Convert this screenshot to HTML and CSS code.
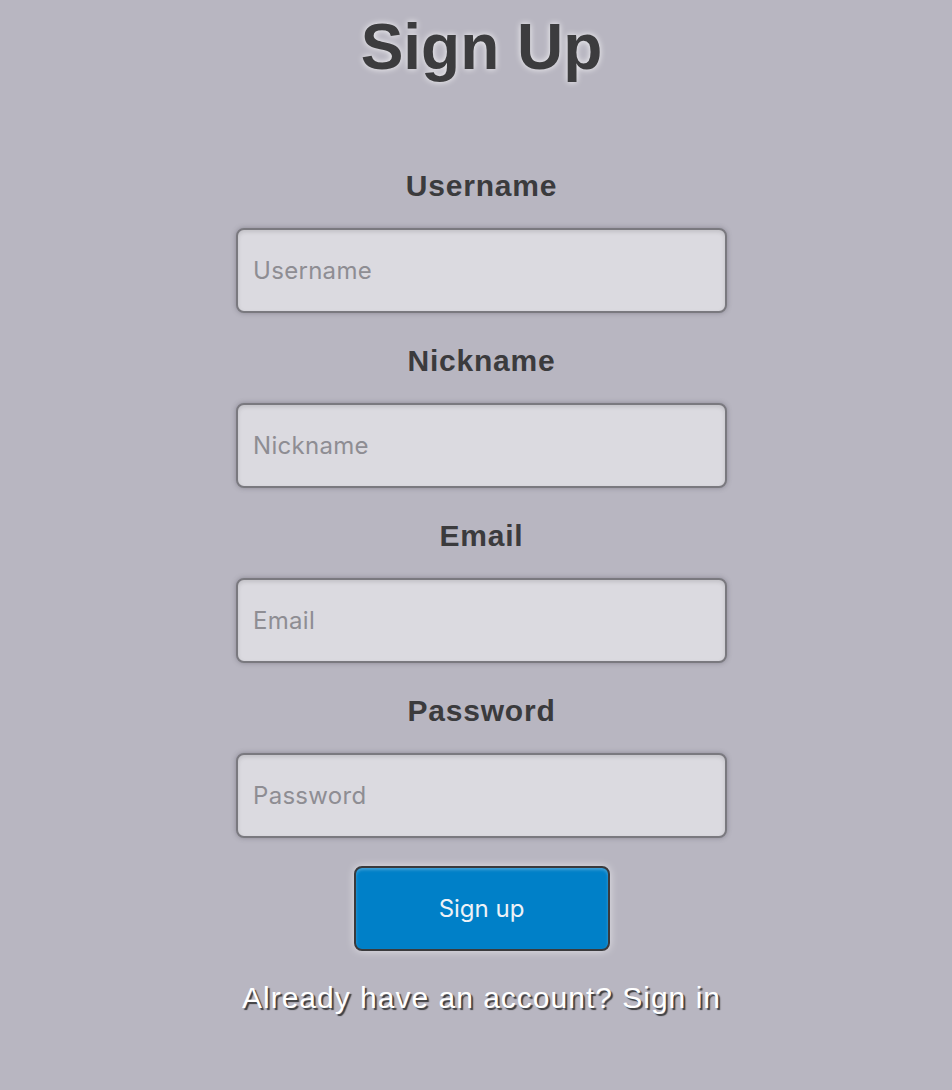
FILE: index.html
```html
<!DOCTYPE html>
<html lang="en">
<head>
<meta charset="utf-8">
<title>Sign Up</title>
<link rel="stylesheet" href="styles.css">
</head>
<body>
<main class="page">
  <h1 class="title">Sign Up</h1>
  <form class="form">
    <div class="field">
      <label class="label" for="username">Username</label>
      <input class="input" id="username" type="text" placeholder="Username">
    </div>
    <div class="field">
      <label class="label" for="nickname">Nickname</label>
      <input class="input" id="nickname" type="text" placeholder="Nickname">
    </div>
    <div class="field">
      <label class="label" for="email">Email</label>
      <input class="input" id="email" type="email" placeholder="Email">
    </div>
    <div class="field">
      <label class="label" for="password">Password</label>
      <input class="input" id="password" type="password" placeholder="Password">
    </div>
    <button class="button" type="button">Sign up</button>
  </form>
  <p class="switch">Already have an account? Sign in</p>
</main>
</body>
</html>
```
FILE: styles.css
```css
html, body {
  margin: 0;
  padding: 0;
}
body {
  background: #b8b6c1;
  min-height: 1090px;
  font-family: "Liberation Sans", Arial, sans-serif;
}
.page {
  display: flex;
  flex-direction: column;
  align-items: center;
  padding-top: 10px;
  padding-left: 11px;
}
.title {
  margin: 0;
  font-family: "Liberation Sans", Arial, sans-serif;
  font-size: 64px;
  line-height: 74px;
  font-weight: 700;
  color: #3c3c3e;
  text-shadow: 0 0 6px rgba(255, 255, 255, 0.9);
}
.form {
  display: flex;
  flex-direction: column;
  align-items: center;
  margin-top: 54px;
}
.field {
  display: flex;
  flex-direction: column;
  align-items: center;
}
.label {
  font-family: "Liberation Sans", Arial, sans-serif;
  font-size: 30px;
  line-height: 34px;
  letter-spacing: 0.8px;
  font-weight: 700;
  color: #3b3b3d;
  margin-top: 31px;
  margin-bottom: 25px;
}
.input {
  box-sizing: border-box;
  width: 491px;
  height: 85px;
  margin: 0;
  padding: 0 15px;
  border: 2px solid #7a797f;
  border-radius: 8px;
  background: #dbdae0;
  font-family: Inter, "Noto Sans", sans-serif;
  font-size: 24px;
  letter-spacing: 0.3px;
  color: #333;
  box-shadow: 0 0 5px rgba(80, 78, 90, 0.45), inset 0 2px 4px rgba(0, 0, 0, 0.12);
  outline: none;
}
.input::placeholder {
  color: #8e8d93;
}
.button {
  box-sizing: border-box;
  width: 256px;
  height: 85px;
  margin-top: 28px;
  border: 2px solid #3a3a3c;
  border-radius: 8px;
  background: #0080c8;
  color: #eef2f7;
  font-family: Inter, "Noto Sans", sans-serif;
  font-size: 24px;
  font-weight: 400;
  box-shadow: 0 0 8px rgba(255, 255, 255, 0.6), inset 0 2px 3px rgba(255, 255, 255, 0.25);
  cursor: pointer;
}
.switch {
  margin: 29px 0 0;
  font-family: "Liberation Sans", Arial, sans-serif;
  font-size: 30px;
  line-height: 36px;
  letter-spacing: 1px;
  color: #ffffff;
  text-shadow: 2px 2px 1px rgba(40, 40, 40, 0.85);
}
```
